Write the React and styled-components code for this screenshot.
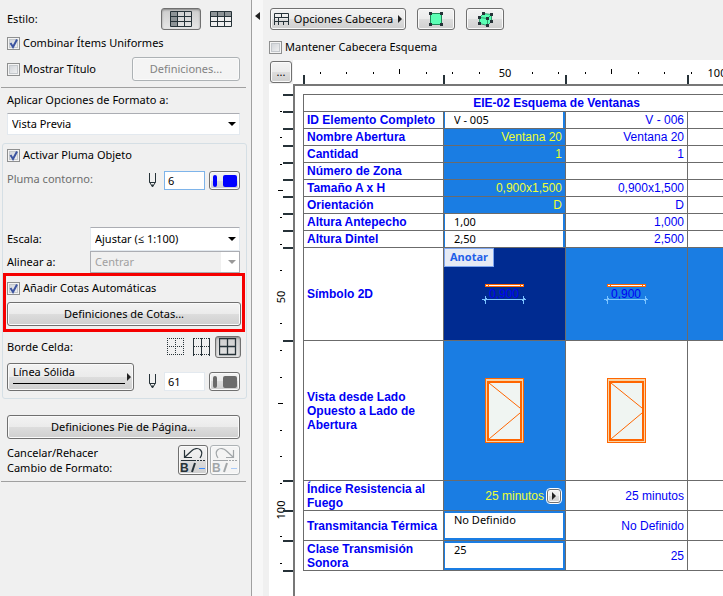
import React, { useState } from "react";
import styled, { createGlobalStyle, css } from "styled-components";

const colors = {
  face: "#f0f0f0",
  line: "#6b6b6b",
  edge: "#707070",
  blue: "#1a7de3",
  navy: "#002b91",
  ink: "#0000f5",
  yellow: "#eeff33",
  orange: "#ff6600",
  icon: "#263238",
};

const uiFont = '"Noto Sans", "Open Sans", sans-serif';
const sheetFont = '"Liberation Sans", Arial, sans-serif';

const rows = [
  { label: "ID Elemento Completo", edit: "V - 005", value: "V - 006" },
  { label: "Nombre Abertura", picked: "Ventana 20", value: "Ventana 20" },
  { label: "Cantidad", picked: "1", value: "1" },
  { label: "Número de Zona", picked: "", value: "" },
  { label: "Tamaño A x H", picked: "0,900x1,500", value: "0,900x1,500" },
  { label: "Orientación", picked: "D", value: "D" },
  { label: "Altura Antepecho", edit: "1,00", value: "1,000" },
  { label: "Altura Dintel", edit: "2,50", value: "2,500" },
];

const tallRows = [
  { label: "Índice Resistencia al Fuego", picked: "25 minutos", value: "25 minutos", more: true },
  { label: "Transmitancia Térmica", edit: "No Definido", value: "No Definido" },
  { label: "Clase Transmisión Sonora", edit: "25", value: "25" },
];

const columnMarks = [10, 150, 272, 394];
const rowMarks = [11, 28, 45, 62, 79, 96, 113, 130, 147, 164, 257, 397, 427, 457, 487];

// one small tick every 26.5px, a longer one at 4 and a number at 8
const ticks = Array.from({ length: 18 }, (_, i) => i + 1);

function TopRuler() {
  return (
    <TopRulerSvg aria-hidden="true">
      {ticks.map(i => {
        const x = Math.round(26.5 * i);
        if (i % 8 === 0) {
          return (
            <text key={i} x={x} y="17" textAnchor="middle">
              {(i / 8) * 50}
            </text>
          );
        }
        const long = i % 8 === 4;
        return <rect key={i} x={x} y={long ? 9 : 12} width="1" height={long ? 5 : 2} />;
      })}
      {columnMarks.map(x => (
        <rect key={x} x={x} y="15" width="2" height="9" fill={colors.icon} />
      ))}
    </TopRulerSvg>
  );
}

function SideRuler() {
  return (
    <SideRulerSvg aria-hidden="true">
      {ticks.map(i => {
        const y = Math.round(26.6 * i);
        if (i % 8 === 0) {
          return (
            <text key={i} transform={`translate(16 ${y}) rotate(-90)`} textAnchor="middle">
              {(i / 8) * 50}
            </text>
          );
        }
        const long = i % 8 === 4;
        return <rect key={i} x={long ? 9 : 11} y={y} width={long ? 5 : 2} height="1" />;
      })}
      {rowMarks.map(y => (
        <rect key={y} x="14" y={y - 1} width="10" height="2" fill={colors.icon} />
      ))}
    </SideRulerSvg>
  );
}

function GridIcon({ side }) {
  return (
    <svg width="22" height="16" viewBox="0 0 22 16" aria-hidden="true">
      {side ? (
        <rect x="1" y="1" width="6" height="14" fill="#8d9396" />
      ) : (
        <rect x="1" y="1" width="20" height="4" fill="#8d9396" />
      )}
      <path
        d="M.5 .5h21v15h-21zM7.5 .5v15M14.5 .5v15M.5 5.5h21M.5 10.5h21"
        fill="none"
        stroke={colors.icon}
      />
    </svg>
  );
}

function PenIcon() {
  return (
    <svg width="8" height="15" viewBox="0 0 8 15" aria-hidden="true">
      <path d="M.5 0v9l3 5 3-5V0M.5 9.5h6" fill="none" stroke={colors.icon} />
      <path d="M2.5 11.5h2L3.5 14z" fill={colors.icon} />
    </svg>
  );
}

function BorderIcon({ kind }) {
  const dotted = { stroke: colors.icon, strokeDasharray: "1 1", fill: "none" };
  const solid = { stroke: colors.icon, fill: "none" };
  return (
    <svg width="18" height="18" viewBox="0 0 18 18" aria-hidden="true">
      {kind === "none" && <path d="M0 .5h17M0 8.5h17M0 16.5h17M.5 0v17M8.5 0v17M16.5 0v17" {...dotted} />}
      {kind === "sides" && (
        <>
          <path d="M1 .5h16M1 16.5h16M1 8.5h16" {...dotted} />
          <path d="M.5 0v18M8.5 0v18M16.5 0v18" {...solid} />
        </>
      )}
      {kind === "all" && <path d="M.5 .5h16v16H.5zM8.5 .5v16M.5 8.5h16" {...solid} strokeWidth="1.3" />}
    </svg>
  );
}

function HistoryIcon({ redo }) {
  return (
    <svg width="28" height="28" viewBox="0 0 28 28" opacity={redo ? 0.4 : 1} aria-hidden="true">
      <g transform={redo ? "translate(28 0) scale(-1 1)" : undefined}>
        <path
          d="M5.5 4v7.500h7.500M6 11L13 4.500C15 2.500 19 1.500 21.500 4c2 2 1.500 5-.5 8"
          fill="none"
          stroke={colors.icon}
          strokeWidth="1.2"
        />
      </g>
      <path d="M2 14.5h13" stroke={colors.icon} />
      <path d="M15 14.5h12" stroke={colors.icon} strokeDasharray="2 1" />
      <text x="1" y="26" fontFamily="Liberation Sans" fontSize="12" fontWeight="bold" fill={colors.icon}>
        B
      </text>
      <path d="M13 26l3-9" stroke={colors.icon} strokeWidth="2" />
      <path d="M20 22.5h6" stroke="#3b8cff" />
    </svg>
  );
}

function HeaderIcon() {
  return (
    <svg width="15" height="12" viewBox="0 0 15 12" aria-hidden="true">
      <path
        d="M.5 12V.5h14V12M.5 4.5h14M.5 8.5h14M7.5 .5v4M4.5 4.5v4M4.5 8.5V12M9.5 8.5V12"
        fill="none"
        stroke={colors.icon}
      />
    </svg>
  );
}

function SquareIcon() {
  return (
    <svg width="14" height="14" viewBox="0 0 14 14" aria-hidden="true">
      <rect x="1.5" y="1.5" width="11" height="11" fill="#5cffb5" stroke="#1d8a58" />
      <path d="M0 0h3v3H0zM11 0h3v3h-3zM0 11h3v3H0zM11 11h3v3h-3z" fill={colors.icon} />
    </svg>
  );
}

function CubeIcon() {
  return (
    <svg width="15" height="15" viewBox="0 0 15 15" aria-hidden="true">
      <path d="M1.5 5.5l4-4 8 1v7l-4 4-8-2z" fill="#5cffb5" />
      <path d="M1.5 5.5l8 1v7l-8-2zM1.5 5.5l4-4 8 1-4 4M13.5 2.5v7l-4 4" fill="none" stroke="#1d8a58" strokeWidth=".8" />
      <path
        d="M0 4h3v3H0zM4 0h3v3H4zM12 1h3v3h-3zM8 5h3v3H8zM0 10h3v3H0zM8 12h3v3H8zM12 8h3v3h-3z"
        fill={colors.icon}
      />
    </svg>
  );
}

function Triangle({ dir, color = "#222" }) {
  const shapes = { right: "M0 0l4 4-4 4z", left: "M5 0v8L0 4z", down: "M0 0h8L4 4z" };
  const size = { right: [4, 8], left: [5, 8], down: [8, 4] }[dir];
  return (
    <svg width={size[0]} height={size[1]} aria-hidden="true">
      <path d={shapes[dir]} fill={color} />
    </svg>
  );
}

function PlanSymbol() {
  return (
    <Drawing width="46" height="22" viewBox="0 0 46 22" role="img" aria-label="Símbolo 2D">
      <rect x="3" y="1" width="39" height="3" fill={colors.orange} />
      <path d="M4 2.5h2M7 2.5h31M39 2.5h2" stroke="#fff" />
      <text x="22" y="15" textAnchor="middle" fontSize="12" fill={colors.ink}>
        0,900
      </text>
      <path d="M0 16.5h44M3.5 13v8M41.5 13v8M2 18l3-3M40 18l3-3" stroke="#7cc4ff" fill="none" />
    </Drawing>
  );
}

function WindowSymbol() {
  return (
    <Drawing width="39" height="65" viewBox="0 0 39 65" role="img" aria-label="Vista de la ventana">
      <rect x=".5" y=".5" width="38" height="64" fill="#f7d3a6" stroke={colors.orange} />
      <rect x="3" y="4" width="33" height="58" fill="#f0f5f2" stroke={colors.orange} strokeWidth="2" />
      <path d="M4 5l31 25M35 35L4 61" fill="none" stroke={colors.orange} />
    </Drawing>
  );
}

function Tick({ label, checked: initial }) {
  const [checked, setChecked] = useState(Boolean(initial));
  return (
    <TickLabel>
      <TickBox type="checkbox" checked={checked} onChange={e => setChecked(e.target.checked)} />
      {checked && (
        <TickMark width="13" height="13" viewBox="0 0 13 13" aria-hidden="true">
          <path d="M3.5 6l2.500 4 4-7.500" fill="none" stroke="#3c54a0" strokeWidth="2" />
        </TickMark>
      )}
      <span>{label}</span>
    </TickLabel>
  );
}

function Dropdown({ id, value, tall, disabled }) {
  return (
    <SelectWrapper $tall={tall}>
      <Select id={id} disabled={disabled} defaultValue={value}>
        <option>{value}</option>
      </Select>
      <Triangle dir="down" color={disabled ? "#999" : "#000"} />
    </SelectWrapper>
  );
}

function PenControl({ value, color, name, focus }) {
  return (
    <PenGroup>
      <PenIcon />
      <PenInput defaultValue={value} aria-label={name} $focus={focus} />
      <SwatchButton aria-label={`Color ${name}`}>
        <Swatch $color={color} $thin />
        <Swatch $color={color} />
      </SwatchButton>
    </PenGroup>
  );
}

function ElementRow({ row, tall }) {
  return (
    <Row $height={tall ? 30 : 17}>
      <RowLabel scope="row">{row.label}</RowLabel>
      {row.edit ? (
        <EditCell>
          <CellInput defaultValue={row.edit} aria-label={row.label} $tall={tall} />
        </EditCell>
      ) : (
        <Cell $picked>
          {row.more ? (
            <CellTools>
              {row.picked}
              <MoreButton aria-label="Más">
                <Triangle dir="right" />
              </MoreButton>
            </CellTools>
          ) : (
            row.picked
          )}
        </Cell>
      )}
      <Cell>{row.value}</Cell>
      <Cell />
    </Row>
  );
}

function FormatPanel() {
  return (
    <Panel>
      <Section>
        <PanelRow $height={22}>
          <span>Estilo:</span>
          <ButtonSet>
            <ToolButton $width={40} $pressed aria-label="Cabecera a la izquierda">
              <GridIcon side />
            </ToolButton>
            <ToolButton $width={40} $flat aria-label="Cabecera arriba">
              <GridIcon />
            </ToolButton>
          </ButtonSet>
        </PanelRow>
        <PanelRow $height={16} $top={5}>
          <Tick label="Combinar Ítems Uniformes" checked />
        </PanelRow>
        <PanelRow $height={24} $top={6}>
          <Tick label="Mostrar Título" />
          <TextButton $width="108px" disabled>
            Definiciones...
          </TextButton>
        </PanelRow>
      </Section>
      <Rule />
      <Section $top={4}>
        <label htmlFor="target">Aplicar Opciones de Formato a:</label>
        <Dropdown id="target" value="Vista Previa" />
      </Section>
      <Group>
        <GroupBody $top={3}>
          <Tick label="Activar Pluma Objeto" checked />
          <PanelRow $height={19} $top={8} $start>
            <Muted>Pluma contorno:</Muted>
            <PenControl value="6" color="#0000ff" name="Pluma contorno" focus />
          </PanelRow>
          <ScaleFields>
            <label htmlFor="scale">Escala:</label>
            <Dropdown id="scale" value="Ajustar (≤ 1:100)" tall />
            <label htmlFor="align">Alinear a:</label>
            <Dropdown id="align" value="Centrar" disabled />
          </ScaleFields>
        </GroupBody>
        <Highlight>
          <Tick label="Añadir Cotas Automáticas" checked />
          <TextButton $width="100%" $top={6}>
            Definiciones de Cotas...
          </TextButton>
        </Highlight>
        <GroupBody $top={4}>
          <PanelRow $height={22}>
            <span>Borde Celda:</span>
            <ButtonSet>
              <ToolButton $width={26} $flat aria-label="Sin borde">
                <BorderIcon kind="none" />
              </ToolButton>
              <ToolButton $width={26} $flat aria-label="Bordes verticales">
                <BorderIcon kind="sides" />
              </ToolButton>
              <ToolButton $width={26} $pressed aria-label="Todos los bordes">
                <BorderIcon kind="all" />
              </ToolButton>
            </ButtonSet>
          </PanelRow>
          <PanelRow $height={28} $top={5} $end>
            <LineButton>
              <LineName>Línea Sólida</LineName>
              <Triangle dir="right" />
            </LineButton>
            <PenControl value="61" color="#6b6b6b" name="Pluma borde" />
          </PanelRow>
        </GroupBody>
      </Group>
      <Section $top={16}>
        <TextButton $width="100%">Definiciones Pie de Página...</TextButton>
        <PanelRow $height={30} $top={6}>
          <Lines>
            <span>Cancelar/Rehacer</span>
            <span>Cambio de Formato:</span>
          </Lines>
          <HistorySet>
            <HistoryButton aria-label="Cancelar">
              <HistoryIcon />
            </HistoryButton>
            <HistoryButton aria-label="Rehacer" disabled>
              <HistoryIcon redo />
            </HistoryButton>
          </HistorySet>
        </PanelRow>
      </Section>
      <Rule />
    </Panel>
  );
}

function Schedule() {
  return (
    <Table>
      <colgroup>
        <Col $width={140} />
        <Col $width={122} />
        <Col $width={122} />
        <Col $width={122} />
      </colgroup>
      <tbody>
        <Row $height={17}>
          <Title colSpan="4">EIE-02 Esquema de Ventanas</Title>
        </Row>
        {rows.map(row => (
          <ElementRow key={row.label} row={row} />
        ))}
        <Row $height={93}>
          <RowLabel scope="row">Símbolo 2D</RowLabel>
          <DrawingCell $color={colors.navy}>
            <Note>Anotar</Note>
            <PlanSymbol />
          </DrawingCell>
          <DrawingCell $color={colors.blue}>
            <PlanSymbol />
          </DrawingCell>
          <DrawingCell $color={colors.blue} />
        </Row>
        <Row $height={140}>
          <RowLabel scope="row">Vista desde Lado Opuesto a Lado de Abertura</RowLabel>
          <DrawingCell $color={colors.blue}>
            <WindowSymbol />
          </DrawingCell>
          <DrawingCell>
            <WindowSymbol />
          </DrawingCell>
          <DrawingCell />
        </Row>
        {tallRows.map(row => (
          <ElementRow key={row.label} row={row} tall />
        ))}
      </tbody>
    </Table>
  );
}

export default function App() {
  return (
    <>
      <GlobalStyle />
      <Page>
        <FormatPanel />
        <Splitter aria-label="Ocultar panel">
          <Triangle dir="left" />
        </Splitter>
        <Main>
          <Toolbar>
            <ToolButton $width={136}>
              <HeaderIcon />
              <span>Opciones Cabecera</span>
              <Triangle dir="right" />
            </ToolButton>
            <ToolButton $width={38} aria-label="Ajustar 2D">
              <SquareIcon />
            </ToolButton>
            <ToolButton $width={38} aria-label="Ajustar 3D">
              <CubeIcon />
            </ToolButton>
          </Toolbar>
          <KeepHeader>
            <Tick label="Mantener Cabecera Esquema" />
          </KeepHeader>
          <Viewer>
            <Corner>
              <CornerButton>...</CornerButton>
            </Corner>
            <TopRuler />
            <SideRuler />
            <Canvas>
              <Schedule />
            </Canvas>
          </Viewer>
        </Main>
      </Page>
    </>
  );
}

const GlobalStyle = createGlobalStyle`
  * {
    box-sizing: border-box;
  }
  body {
    margin: 0;
    background: ${colors.face};
    color: #000;
    font: 11px/16px ${uiFont};
    overflow: hidden;
  }
  button, input, select, textarea {
    font: inherit;
    color: inherit;
    margin: 0;
  }
  svg {
    flex: none;
    display: block;
  }
`;

const Page = styled.div`
  display: flex;
  height: 100vh;
`;

const Panel = styled.aside`
  flex: 0 0 251px;
  padding-top: 8px;
`;

const Section = styled.section`
  padding: 0 11px 0 7px;
  margin-top: ${props => props.$top || 0}px;
`;

const PanelRow = styled.div`
  display: flex;
  justify-content: space-between;
  align-items: ${props => (props.$start ? "flex-start" : props.$end ? "flex-end" : "center")};
  height: ${props => props.$height}px;
  margin-top: ${props => props.$top || 0}px;
`;

const Rule = styled.hr`
  height: 1px;
  margin: 6px 5px 0 1px;
  border: 0;
  background: #a0a0a0;
`;

const Group = styled.div`
  margin: 8px 4px 0 2px;
  padding-bottom: 7px;
  border: 1px solid #d5dfe5;
  border-radius: 3px;
`;

const GroupBody = styled.div`
  padding: ${props => props.$top}px 6px 0 4px;
`;

const Highlight = styled.div`
  margin-right: 1px;
  padding: 4px 1px 3px;
  border: 3px solid #f50000;
`;

const Muted = styled.span`
  color: #6d6d6d;
`;

const Lines = styled.div`
  display: flex;
  flex-direction: column;
  line-height: 15px;
`;

const ScaleFields = styled.div`
  display: grid;
  grid-template-columns: 83px 1fr;
  align-items: center;
  margin-top: 37px;
`;

const raised = css`
  border: 1px solid ${colors.edge};
  border-radius: 3px;
  background: linear-gradient(#f3f3f3 0%, #ebebeb 50%, #dddddd 50%, #cfcfcf 100%);
  box-shadow: inset 0 0 0 1px #fafafa;
`;

const TextButton = styled.button`
  ${raised}
  display: block;
  width: ${props => props.$width};
  height: 24px;
  margin-top: ${props => props.$top || 0}px;
  padding: 0;

  &:disabled {
    color: #838383;
    background: #f4f4f4;
    border-color: #adb2b5;
  }
`;

const ToolButton = styled.button`
  ${raised}
  display: flex;
  align-items: center;
  justify-content: center;
  gap: 5px;
  width: ${props => props.$width}px;
  height: 22px;
  padding: 0;

  ${props =>
    props.$flat &&
    css`
      border-color: transparent;
      background: none;
      box-shadow: none;
    `}
  ${props =>
    props.$pressed &&
    css`
      background: linear-gradient(#cccccc, #e6e6e6);
      box-shadow: inset 0 1px 2px #888;
    `}
`;

const ButtonSet = styled.div`
  display: flex;
  margin-right: -1px;
`;

const HistorySet = styled.div`
  display: flex;
  gap: 2px;
`;

const HistoryButton = styled.button`
  ${raised}
  width: 30px;
  height: 30px;
  padding: 0;

  &:disabled {
    background: #f4f4f4;
    border-color: #adb2b5;
  }
`;

const LineButton = styled.button`
  ${raised}
  display: flex;
  align-items: center;
  gap: 2px;
  width: 127px;
  height: 28px;
  padding: 0 2px 0 5px;
`;

const LineName = styled.span`
  flex: 1;
  align-self: flex-start;
  height: 20px;
  border-bottom: 1px solid #000;
  text-align: left;
`;

const PenGroup = styled.div`
  display: flex;
  align-items: center;
`;

const PenInput = styled.input`
  width: 41px;
  height: 19px;
  margin: 0 4px 0 7px;
  padding: 0 3px;
  border: 1px solid ${props => (props.$focus ? "#7eb4ea" : "#e3e9ef")};
  background: #fff;
`;

const SwatchButton = styled.button`
  ${raised}
  display: flex;
  align-items: center;
  justify-content: space-between;
  width: 31px;
  height: 19px;
  padding: 0 2px 0 3px;
`;

const Swatch = styled.span`
  width: ${props => (props.$thin ? 4 : 14)}px;
  height: 12px;
  border-radius: 2px;
  background: ${props => props.$color};
`;

const SelectWrapper = styled.div`
  display: grid;
  align-items: center;
  height: ${props => (props.$tall ? 24 : 22)}px;

  ${Section} > & {
    margin-top: 5px;
  }
  > * {
    grid-area: 1 / 1;
  }
  > svg {
    justify-self: end;
    margin-right: 4px;
    pointer-events: none;
  }
`;

const Select = styled.select`
  appearance: none;
  width: 100%;
  height: 100%;
  padding: 0 20px 0 4px;
  border: 1px solid #e3e9ef;
  border-top-color: #abadb3;
  border-radius: 0;
  background: #fff;

  &:disabled {
    opacity: 1;
    color: #a0a0a0;
    border-color: #abadb3;
    background: linear-gradient(90deg, #f0f0f0 calc(100% - 18px), #fff calc(100% - 18px));
  }
`;

const TickLabel = styled.label`
  display: grid;
  grid-template-columns: 13px auto;
  column-gap: 3px;
  align-items: center;
  justify-content: start;
  height: 16px;
`;

const TickBox = styled.input`
  appearance: none;
  grid-area: 1 / 1;
  width: 13px;
  height: 13px;
  border: 1px solid #8e8f8f;
  background: linear-gradient(135deg, #cbcfd5, #f6f6f6);
  box-shadow: inset 0 0 0 1px #f4f4f4, inset 0 0 0 2px #c4c8cc;
`;

const TickMark = styled.svg`
  grid-area: 1 / 1;
  pointer-events: none;
`;

const Splitter = styled.button`
  display: flex;
  justify-content: center;
  flex: 0 0 12px;
  padding: 12px 0 0;
  border: 0;
  border-left: 1px solid #a0a0a0;
  background: #f7f7f7;
`;

const Main = styled.main`
  flex: 1;
  min-width: 0;
  display: flex;
  flex-direction: column;
  padding: 8px 0 0 6px;
`;

const Toolbar = styled.div`
  display: flex;
  gap: 11px;
  padding-left: 1px;
`;

const KeepHeader = styled.div`
  margin: 9px 0 5px;
`;

const Viewer = styled.div`
  flex: 1;
  min-height: 0;
  display: grid;
  grid-template: 24px 1fr / 24px 1fr;
  background: #fff;
`;

const Corner = styled.div`
  padding: 1px;
  background: ${colors.face};
`;

const CornerButton = styled.button`
  ${raised}
  display: block;
  width: 100%;
  height: 22px;
  padding: 0;
`;

const TopRulerSvg = styled.svg`
  width: 100%;
  height: 24px;
  font-size: 11px;
`;

const SideRulerSvg = styled.svg`
  width: 24px;
  height: 100%;
  font-size: 11px;
`;

const Canvas = styled.div`
  overflow: hidden;
  padding: 8px 0 0 8px;
  border: solid #777;
  border-width: 2px 0 0 2px;
`;

const Table = styled.table`
  width: 507px;
  table-layout: fixed;
  border-collapse: collapse;
  color: ${colors.ink};
  font: 12px/14px ${sheetFont};
`;

const Col = styled.col`
  width: ${props => props.$width}px;
`;

const Row = styled.tr`
  height: ${props => props.$height}px;
`;

const Title = styled.th`
  padding: 0;
  border: 1px solid ${colors.line};
`;

const RowLabel = styled.th`
  padding: 0 0 0 3px;
  border: 1px solid ${colors.line};
  text-align: left;
`;

const Cell = styled.td`
  padding: 0 3px 0 0;
  border: 1px solid ${colors.line};
  text-align: right;
  color: ${props => (props.$picked ? colors.yellow : colors.ink)};
  background: ${props => (props.$picked ? colors.blue : "#fff")};
`;

const EditCell = styled.td`
  padding: 0;
  border: 1px solid ${colors.line};
`;

const CellInput = styled.input`
  display: block;
  width: 100%;
  height: ${props => (props.$tall ? 29 : 16)}px;
  padding: ${props => (props.$tall ? "0 9px 12px" : "0 9px 2px")};
  border: solid ${colors.blue};
  border-width: ${props => (props.$tall ? "2px 2px 2px 1px" : "0 2px 0 1px")};
  background: #fff;
  color: #000;
  font: 11px/14px ${uiFont};
`;

const CellTools = styled.div`
  display: flex;
  align-items: center;
  justify-content: flex-end;
  gap: 2px;
`;

const MoreButton = styled.button`
  ${raised}
  display: flex;
  align-items: center;
  justify-content: center;
  width: 14px;
  height: 14px;
  margin: 1px;
  padding: 0;
  outline: 1px solid #fff;
`;

const DrawingCell = styled.td`
  position: relative;
  padding: 0;
  border: 1px solid ${colors.line};
  background: ${props => props.$color || "#fff"};
  background-clip: padding-box;
`;

const Drawing = styled.svg`
  margin: 0 auto;
`;

const Note = styled.span`
  position: absolute;
  top: 0;
  left: 0;
  padding: 0 5px 1px;
  border: 1px solid #7ea6f0;
  background: #e6ebf5;
  color: #1f5fe8;
  font: bold 11px/16px ${uiFont};
`;
